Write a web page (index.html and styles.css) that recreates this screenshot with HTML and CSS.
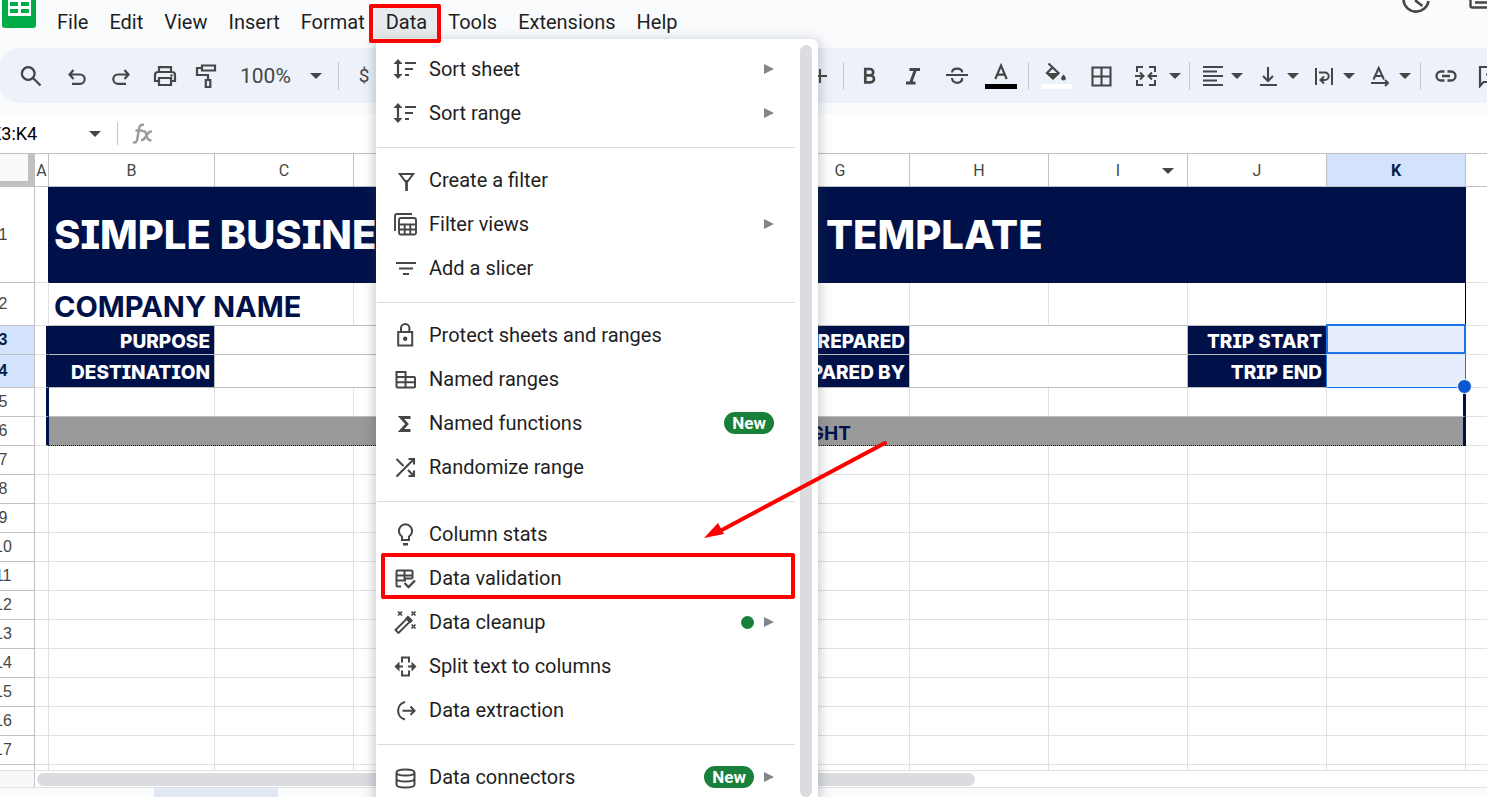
FILE: index.html
```html
<!DOCTYPE html>
<html lang="en">
<head>
<meta charset="utf-8">
<title>Simple Business Template</title>
<link rel="stylesheet" href="styles.css">
</head>
<body>
<svg class="defs" aria-hidden="true">
  <symbol id="caret" viewBox="0 0 12 6"><path d="M0 0h12L6 6z" fill="#444746"/></symbol>
  <symbol id="sort" viewBox="0 0 24 24"><path d="M5 4v16M12 6h11M12 12h8M12 18h4" fill="none" stroke="#444746" stroke-width="2.200"/><path d="m5 2 4.500 5h-9zM5 22l4.500-5h-9z" fill="#444746"/></symbol>
</svg>
<div class="app">
  <header class="top">
    <svg class="logo" width="34" height="28" viewBox="0 0 34 28" aria-label="Sheets"><path d="M0 0h34v25a3 3 0 0 1-3 3H3a3 3 0 0 1-3-3z" fill="#00ac47"/><path d="M6 0h23v16H6z" fill="#fff"/><path d="M8 2h8v4H8zM19 2h8v4h-8zM8 9h8v4H8zM19 9h8v4h-8z" fill="#00ac47"/></svg>
    <nav class="menubar">
      <button>File</button><button>Edit</button><button>View</button><button>Insert</button><button>Format</button><button class="open">Data</button><button>Tools</button><button>Extensions</button><button>Help</button>
    </nav>
    <div class="actions">
      <button aria-label="History"><svg width="30" height="16" viewBox="0 0 30 16"><path d="M2.500 0A12.600 12.600 0 0 0 27.500 1M15 0v1l6.500 5" fill="none" stroke="#444746" stroke-width="2.600"/></svg></button>
      <button aria-label="Comments"><svg width="30" height="12" viewBox="0 0 30 12"><path d="M1.500 0v5.500a2 2 0 0 0 2 2H24l5 4M6 2.500h20" fill="none" stroke="#444746" stroke-width="2.400"/></svg></button>
    </div>
  </header>

  <div class="toolbar-wrap">
  <div class="toolbar" role="toolbar" aria-label="Main">
    <button class="t48" aria-label="Search"><svg width="24" height="24" viewBox="0 0 24 24"><path d="M14 14 21.500 21.500M9.200 3.200a6.300 6.300 0 1 0 .1 0z" fill="none" stroke="#444746" stroke-width="2.300"/></svg></button>
    <button class="t44" aria-label="Undo"><svg width="24" height="24" viewBox="0 0 24 24"><path d="M8.500 6 4.500 10.500l4 4.500M5 10.500h10a4.700 4.700 0 0 1 0 9.400H7" fill="none" stroke="#444746" stroke-width="2.200"/></svg></button>
    <button class="t44" aria-label="Redo"><svg width="24" height="24" viewBox="0 0 24 24"><path d="m15.500 6 4 4.500-4 4.500M19 10.500H9a4.700 4.700 0 0 0 0 9.400h8" fill="none" stroke="#444746" stroke-width="2.200"/></svg></button>
    <button class="t44" aria-label="Print"><svg width="24" height="24" viewBox="0 0 24 24"><path d="M6 8V3.200h12V8M6 17H2V11a3 3 0 0 1 3-3h14a3 3 0 0 1 3 3v6h-4M6 14h12v7H6z" fill="none" stroke="#444746" stroke-width="2.200"/><circle cx="18.500" cy="11.500" r="1.200" fill="#444746"/></svg></button>
    <button class="t40" aria-label="Paint format"><svg width="24" height="26" viewBox="0 0 24 26"><path d="M7 2.500h13v5H7zM7 5H2v7h11v5M10.800 17h4.500v7h-4.500z" fill="none" stroke="#444746" stroke-width="2.200"/></svg></button>
    <label class="zoom"><select aria-label="Zoom"><option>100%</option></select><svg class="caret" width="12" height="6"><use href="#caret"/></svg></label>
    <i class="sep m7"></i>
    <button class="t36 txt" aria-label="Currency">$</button>
    <span class="gap"></span>
    <button class="t40" aria-label="Increase font size"><svg width="20" height="20" viewBox="0 0 20 20"><path d="M10 3v14M3 10h14" stroke="#444746" stroke-width="2"/></svg></button>
    <i class="sep m3"></i>
    <button class="t44" aria-label="Bold"><svg width="24" height="24" viewBox="0 0 24 24"><path d="M8.300 5h4.700a3.200 3.200 0 0 1 0 6.400H8.300zM8.300 11.400h5.200a3.500 3.500 0 0 1 0 7H8.300z" fill="none" stroke="#444746" stroke-width="2.700"/></svg></button>
    <button class="t44" aria-label="Italic"><svg width="24" height="24" viewBox="0 0 24 24"><path d="M8.500 5.500H19M5 19h9.500M14.500 5.500 9.500 19" fill="none" stroke="#444746" stroke-width="2.900"/></svg></button>
    <button class="t44" aria-label="Strikethrough"><svg width="24" height="24" viewBox="0 0 24 24"><path d="M1 11h22M7 8.500c.5-5 9.500-5.200 10.300-.2M7 14c.3 6.500 10.500 6.500 10.200 0" fill="none" stroke="#444746" stroke-width="2.200"/></svg></button>
    <button class="t44" aria-label="Text color"><svg width="32" height="28" viewBox="0 0 32 28"><path d="M10.300 17 16 3.500 21.700 17M12.400 12.600h7.200" fill="none" stroke="#444746" stroke-width="2.200"/><path d="M0 22h32v5H0z"/></svg></button>
    <i class="sep m5"></i>
    <button class="t44" aria-label="Fill color"><svg width="32" height="32" viewBox="0 0 32 32"><path d="M8.500 3.500 18.500 13l-5.500 5.500L7 13l6-6" fill="none" stroke="#444746" stroke-width="2.200"/><path d="M6 13h14l-7 6.500z" fill="#444746"/><path d="M23.500 14.500s2.300 2.300 2.300 3.800a2.300 2.300 0 0 1-4.600 0c0-1.500 2.300-3.800 2.300-3.800z" fill="#444746"/><path d="M1 24h31v5H1z" fill="#fff"/></svg></button>
    <button class="t46" aria-label="Borders"><svg width="24" height="24" viewBox="0 0 24 24"><path d="M3.500 3.500h18v18h-18zM12.500 3.500v18M3.500 12.500h18" fill="none" stroke="#444746" stroke-width="2.100"/></svg></button>
    <button class="t44" aria-label="Merge cells"><svg width="24" height="24" viewBox="0 0 24 24"><path d="M9 3H3v5M9 21H3v-5M15 3h6v5M15 21h6v-5M1 12h8M23 12h-8M6 8.500 9.500 12 6 15.500M18 8.500 14.500 12l3.500 3.500" fill="none" stroke="#444746" stroke-width="2"/></svg></button>
    <button class="t14" aria-label="Merge options"><svg width="12" height="6"><use href="#caret"/></svg></button>
    <i class="sep m7"></i>
    <button class="t32" aria-label="Horizontal align"><svg width="24" height="24" viewBox="0 0 24 24"><path d="M2 3h20M2 7.500h14M2 12h20M2 16.500h14M2 21h20" stroke="#444746" stroke-width="2"/></svg></button>
    <button class="t16" aria-label="Horizontal align options"><svg width="12" height="6"><use href="#caret"/></svg></button>
    <button class="t36 sp" aria-label="Vertical align"><svg width="24" height="24" viewBox="0 0 24 24"><path d="M13 3v14M8 12l5 5 5-5M5 21h17" fill="none" stroke="#444746" stroke-width="2.100"/></svg></button>
    <button class="t16" aria-label="Vertical align options"><svg width="12" height="6"><use href="#caret"/></svg></button>
    <button class="t36 sp" aria-label="Wrap"><svg width="24" height="24" viewBox="0 0 24 24"><path d="M5 4v17M21 4v17M8 8.500h6a3.700 3.700 0 0 1 0 7.400H10M13 12.500 9.500 16l3.500 3.500" fill="none" stroke="#444746" stroke-width="2"/></svg></button>
    <button class="t16" aria-label="Wrap options"><svg width="12" height="6"><use href="#caret"/></svg></button>
    <button class="t36 sp" aria-label="Rotate"><svg width="24" height="24" viewBox="0 0 24 24"><path d="M6.500 15.500 11.700 4 17 15.500M8.500 12h6.500M4 19h16M18 16l3 3-3 3" fill="none" stroke="#444746" stroke-width="2"/></svg></button>
    <button class="t16" aria-label="Rotate options"><svg width="12" height="6"><use href="#caret"/></svg></button>
    <i class="sep m7"></i>
    <button class="t36" aria-label="Link"><svg width="24" height="24" viewBox="0 0 24 24"><path d="M10.500 7.500H7a4.500 4.500 0 0 0 0 9h3.500M13.500 7.500H17a4.500 4.500 0 0 1 0 9h-3.500M8 12h8" fill="none" stroke="#444746" stroke-width="2.300"/></svg></button>
    <button class="t44" aria-label="Comment"><svg width="18" height="24" viewBox="0 0 18 24"><path d="M3 22V3h15v15H6.500zM9 10.500h9" fill="none" stroke="#444746" stroke-width="2.200"/></svg></button>
  </div>
  </div>

  <div class="formula">
    <label class="namebox"><input aria-label="Name box" value="K3:K4"><svg class="caret" width="12" height="6"><use href="#caret"/></svg></label>
    <i class="sep"></i>
    <svg class="fx" width="22" height="22" viewBox="0 0 22 22" aria-hidden="true"><path d="M1 19c3 1.500 4-1 4.500-4L7 6c.6-3.500 2-5 5-4M3.500 7.500h7M10.500 8.500c3-1 3 1 4 4s1.500 5.500 5 4.500M20 8.500c-3-.5-3.500 1-5.500 4S12 17.500 9 16.800" fill="none" stroke="#9b9e9d" stroke-width="2.500"/></svg>
    <input class="fxinput" aria-label="Formula">
  </div>

  <main class="sheet">
    <table>
      <colgroup><col class="c-num"><col class="c-a"><col class="c-b"><col class="c"><col class="c"><col class="c"><col class="c"><col class="c"><col class="c"><col class="c"><col class="c"><col class="c"><col></colgroup>
      <thead><tr><th class="corner"></th><th>A</th><th>B</th><th>C</th><th>D</th><th>E</th><th>F</th><th>G</th><th>H</th><th class="has-caret">I<svg width="12" height="6"><use href="#caret"/></svg></th><th>J</th><th class="sel">K</th><th class="rest"></th></tr></thead>
      <tbody>
        <tr class="r1"><th>1</th><td class="thin"></td><td class="title" colspan="5">SIMPLE BUSINESS</td><td class="title right" colspan="5">TEMPLATE</td><td></td></tr>
        <tr class="r2"><th>2</th><td></td><td class="company gb" colspan="2">COMPANY NAME</td><td class="gb"></td><td class="gb"></td><td class="gb"></td><td class="gb"></td><td class="gb"></td><td class="gb"></td><td class="gb"></td><td class="gb edge"></td><td></td></tr>
        <tr class="r3"><th class="sel">3</th><td class="bar"></td><td class="label">PURPOSE</td><td class="gb gr" colspan="3"></td><td class="label" colspan="2">DATE PREPARED</td><td class="gb gr" colspan="2"></td><td class="label">TRIP START</td><td class="pick active"></td><td></td></tr>
        <tr class="r4"><th class="sel">4</th><td class="bar"></td><td class="label">DESTINATION</td><td class="gb gr" colspan="3"></td><td class="label" colspan="2">PREPARED BY</td><td class="gb gr" colspan="2"></td><td class="label">TRIP END</td><td class="pick last"></td><td></td></tr>
        <tr><th>5</th><td class="bar"></td><td class="gb"></td><td class="gb"></td><td class="gb"></td><td class="gb"></td><td class="gb"></td><td class="gb"></td><td class="gb"></td><td class="gb"></td><td class="gb"></td><td class="gb bar"></td><td></td></tr>
        <tr><th>6</th><td class="bar"></td><td class="section" colspan="10">DEPARTURE FLIGHT</td><td></td></tr>
        <tr><th>7</th><td></td><td></td><td></td><td></td><td></td><td></td><td></td><td></td><td></td><td></td><td></td><td></td></tr>
        <tr><th>8</th><td></td><td></td><td></td><td></td><td></td><td></td><td></td><td></td><td></td><td></td><td></td><td></td></tr>
        <tr><th>9</th><td></td><td></td><td></td><td></td><td></td><td></td><td></td><td></td><td></td><td></td><td></td><td></td></tr>
        <tr><th>10</th><td></td><td></td><td></td><td></td><td></td><td></td><td></td><td></td><td></td><td></td><td></td><td></td></tr>
        <tr><th>11</th><td></td><td></td><td></td><td></td><td></td><td></td><td></td><td></td><td></td><td></td><td></td><td></td></tr>
        <tr><th>12</th><td></td><td></td><td></td><td></td><td></td><td></td><td></td><td></td><td></td><td></td><td></td><td></td></tr>
        <tr><th>13</th><td></td><td></td><td></td><td></td><td></td><td></td><td></td><td></td><td></td><td></td><td></td><td></td></tr>
        <tr><th>14</th><td></td><td></td><td></td><td></td><td></td><td></td><td></td><td></td><td></td><td></td><td></td><td></td></tr>
        <tr><th>15</th><td></td><td></td><td></td><td></td><td></td><td></td><td></td><td></td><td></td><td></td><td></td><td></td></tr>
        <tr><th>16</th><td></td><td></td><td></td><td></td><td></td><td></td><td></td><td></td><td></td><td></td><td></td><td></td></tr>
        <tr><th>17</th><td></td><td></td><td></td><td></td><td></td><td></td><td></td><td></td><td></td><td></td><td></td><td></td></tr>
        <tr><th></th><td></td><td></td><td></td><td></td><td></td><td></td><td></td><td></td><td></td><td></td><td></td><td></td></tr>
      </tbody>
    </table>
  </main>
  <div class="hscroll"><span class="hcorner"></span><span class="thumb"></span></div>
  <footer class="tabs"><span class="tab"></span></footer>
</div>

<div class="menu" role="menu" aria-label="Data">
  <div class="items">
    <button role="menuitem"><svg width="24" height="24"><use href="#sort"/></svg><span>Sort sheet</span><i class="sub"></i></button>
    <button role="menuitem"><svg width="24" height="24"><use href="#sort"/></svg><span>Sort range</span><i class="sub"></i></button>
    <hr>
    <button role="menuitem"><svg width="24" height="24" viewBox="0 0 24 24"><path d="M6.800 6h13.400l-5.700 7.500h-2z" fill="none" stroke="#444746" stroke-width="2"/><path d="M12.200 12h2.700v11h-2.700z" fill="#444746"/></svg><span>Create a filter</span></button>
    <button role="menuitem"><svg width="24" height="24" viewBox="0 0 24 24"><path d="M2 19V4a2 2 0 0 1 2-2h15M6 8a2 2 0 0 1 2-2h13a2 2 0 0 1 2 2v13a1.500 1.500 0 0 1-1.500 1.500h-14A1.500 1.500 0 0 1 6 21zM6 12.500h17M6 17.500h17M11.700 12.500v10M17.300 12.500v10" fill="none" stroke="#444746" stroke-width="1.900"/></svg><span>Filter views</span><i class="sub"></i></button>
    <button role="menuitem"><svg width="24" height="24" viewBox="0 0 24 24"><path d="M3 7h20M6 12.500h14M10 18h6" stroke="#444746" stroke-width="2"/></svg><span>Add a slicer</span></button>
    <hr>
    <button role="menuitem"><svg width="24" height="24" viewBox="0 0 24 24"><path d="M5.200 9h14v13.500h-14zM8 9V5.200a4.200 4.200 0 0 1 8.400 0V9" fill="none" stroke="#444746" stroke-width="2"/><circle cx="12.200" cy="15.800" r="2.200" fill="#444746"/></svg><span>Protect sheets and ranges</span></button>
    <button role="menuitem"><svg width="24" height="24" viewBox="0 0 24 24"><path d="M3.500 5h9v5H21a1 1 0 0 1 1 1v8.500a1 1 0 0 1-1 1H4.500a1 1 0 0 1-1-1zM3.500 10h9v10.500M3.500 15.300H22" fill="none" stroke="#444746" stroke-width="2"/></svg><span>Named ranges</span></button>
    <button role="menuitem"><svg width="24" height="24" viewBox="0 0 24 24"><path d="M17.500 6.500H8l6 6.500-6 6.500h9.500" fill="none" stroke="#444746" stroke-width="2.800"/></svg><span>Named functions</span><em class="new">New</em></button>
    <button role="menuitem"><svg width="24" height="24" viewBox="0 0 24 24"><path d="M3.500 21.500 21 4M15.500 4H21v5.500M15.500 21H21v-5.500M21 21l-6-6M3.500 4l7 7" fill="none" stroke="#444746" stroke-width="2.100"/></svg><span>Randomize range</span></button>
    <hr>
    <button role="menuitem"><svg width="24" height="24" viewBox="0 0 24 24"><path d="M9 18v-3.500a6.600 6.600 0 1 1 7 0V18z" fill="none" stroke="#444746" stroke-width="2"/><path d="M10 21h5v2.500h-5z" fill="#444746"/></svg><span>Column stats</span></button>
    <button role="menuitem" class="marked"><svg width="24" height="24" viewBox="0 0 24 24"><path d="M8 20.500H4.500a1 1 0 0 1-1-1V5.500a1 1 0 0 1 1-1h14a1 1 0 0 1 1 1v7M3.500 9.500h16M3.500 14.500H13M11.500 4.500v10M19.500 12.500H11" fill="none" stroke="#444746" stroke-width="2"/><path d="m11.500 17 4 4 6.500-6.500" fill="none" stroke="#444746" stroke-width="2.300"/></svg><span>Data validation</span></button>
    <button role="menuitem"><svg width="24" height="24" viewBox="0 0 24 24"><path d="m2.500 20 12-12 3 3-12 12z" fill="none" stroke="#444746" stroke-width="1.900"/><path d="m12 8.500 3-3 5 5-3 3z" fill="#444746"/><path d="m5 1.500 4 4m0-4-4 4M18.500 1.500l4 4m0-4-4 4M18.500 14.500l4 4m0-4-4 4" stroke="#444746" stroke-width="1.700"/></svg><span>Data cleanup</span><i class="dot"></i><i class="sub"></i></button>
    <button role="menuitem"><svg width="24" height="24" viewBox="0 0 24 24"><path d="M9 8.500V3.500h7v5M9 16.500v5h7v-5M3 12.500h7M15 12.500h7" fill="none" stroke="#444746" stroke-width="2"/><path d="m1.500 12.500 5-5v10zM23.500 12.500l-5-5v10z" fill="#444746"/></svg><span>Split text to columns</span></button>
    <button role="menuitem"><svg width="24" height="24" viewBox="0 0 24 24"><path d="M12 4a9 9 0 0 0 0 17.500M9.500 12.700H21M17.500 8.500l4 4.200-4 4.200" fill="none" stroke="#444746" stroke-width="2.100"/></svg><span>Data extraction</span></button>
    <hr>
    <button role="menuitem"><svg width="24" height="24" viewBox="0 0 24 24"><path d="M3.500 7.500c0-4 18-4 18 0s-18 4-18 0v12c0 4 18 4 18 0v-12M3.500 13.500c0 4 18 4 18 0" fill="none" stroke="#444746" stroke-width="2"/></svg><span>Data connectors</span><em class="new">New</em><i class="sub"></i></button>
  </div>
  <div class="vthumb"></div>
  <svg class="arrow" width="186" height="102" viewBox="0 0 186 102" aria-hidden="true"><path d="M181 4 16 92" stroke="#f00" stroke-width="4" stroke-linecap="round"/><path d="m0 99 14-15 6 11z" fill="#f00"/></svg>
</div>
</body>
</html>
```
FILE: styles.css
```css
* { box-sizing: border-box; }
body { margin: 0; overflow: hidden; background: #fff; font-family: Roboto, sans-serif; color: #1f1f1f; }
button { border: 0; background: none; padding: 0; margin: 0; font: inherit; color: inherit; }
input, select { border: 0; background: none; padding: 0; font: inherit; color: inherit; outline: 0; appearance: none; }
svg { display: block; flex: none; }
.defs { position: absolute; width: 0; height: 0; }

/* The window is scrolled 28px to the right of the app's left edge */
.app { margin-left: -28px; height: 100vh; display: flex; flex-direction: column; }
.top { display: flex; align-items: flex-start; height: 48px; padding-left: 30px; background: #f9fbfd; }
.menubar { display: flex; padding: 6px 0 0 10px; font-size: 20px; }
.menubar button { height: 32px; padding: 0 10px 0 11px; }
.menubar .open { position: relative; background: #e8ebee; }
.menubar .open::after { content: ""; position: absolute; inset: -2px -4px -5px -6px; border: 4px solid #f00; border-radius: 2px; z-index: 5; }
.actions { display: flex; align-items: flex-start; gap: 38px; margin-left: auto; margin-right: -12px; }

.toolbar-wrap { background: #f9fbfd; padding: 0 0 11px 23px; }
.toolbar { display: flex; align-items: center; height: 55px; padding-left: 12px; border-radius: 28px 0 0 28px; background: #edf1fa; color: #444746; overflow: hidden; }
.toolbar button, .toolbar .sep { flex: none; }
.toolbar button { display: flex; align-items: center; justify-content: center; height: 40px; }
.t14 { width: 14px; } .t16 { width: 16px; } .t32 { width: 32px; } .t36 { width: 36px; } .t40 { width: 40px; } .t44 { width: 44px; } .t46 { width: 46px; } .t48 { width: 48px; }
.sp { margin-left: 4px; }
.txt { font-size: 19px; }
.sep { width: 1px; height: 28px; background: #c7c7c7; }
.m3 { margin: 0 3px; } .m5 { margin: 0 5px; } .m7 { margin: 0 7px; }
.gap { flex: none; width: 418px; }
.zoom { display: grid; align-items: center; flex: none; width: 104px; padding-left: 13px; }
.zoom > *, .namebox > * { grid-area: 1 / 1; }
.zoom select { font-size: 21px; width: 90px; }
.caret { justify-self: end; margin-right: 9px; }

.formula { display: flex; align-items: center; height: 39px; background: #fff; }
.namebox { display: grid; align-items: center; width: 138px; padding-left: 18px; color: #000; font-size: 18px; }
.namebox input { width: 100px; }
.formula .sep { height: 23px; margin: 0 14px 0 7px; }
.fxinput { flex: 1; }

.sheet { flex: 1; min-height: 0; overflow: hidden; border-top: 1px solid #c0c0c0; }
table { width: 100%; table-layout: fixed; border-collapse: separate; border-spacing: 0; }
.c-num { width: 63px; } .c-a { width: 14px; } .c-b { width: 166px; } .c { width: 139px; }
th { padding: 0; font-size: 16px; font-weight: 400; color: #444746; border-right: 1px solid #c0c0c0; border-bottom: 1px solid #c0c0c0; }
thead tr { height: 33px; }
thead .corner { background: #f8f9fa; border-right: 7px solid #c0c0c0; border-bottom: 6px solid #c0c0c0; }
thead .sel, tbody .sel { background: #d3e3fd; font-weight: 700; color: #041e49; }
.has-caret { position: relative; }
.has-caret svg { position: absolute; right: 13px; top: 14px; }
tbody th { font-family: "Liberation Sans", sans-serif; }
tbody tr { height: 29px; }
tbody .r1 { height: 96px; } tbody .r2 { height: 43px; } tbody .r4 { height: 33px; }
td { padding: 0; border-right: 1px solid #e1e1e1; border-bottom: 1px solid #e1e1e1; white-space: nowrap; overflow: hidden; font-family: Inter, sans-serif; font-weight: 700; font-feature-settings: "cv08"; line-height: 1; }
td:last-child, .rest { border-right: 0; }
.thin { border-right-color: #00114a; }
.title { padding-left: 5px; background: #00114a; color: #fff; border-color: #00114a; font-size: 40px; font-weight: 800; }
.title.right { padding-left: 55px; }
.gb { border-bottom-color: #bdbdbd; }
.gr { border-right-color: #bdbdbd; }
.company { padding: 4px 0 0 5px; color: #00114a; font-size: 29px; }
.edge { border-right-color: #000; }
.bar { border-right: 3px solid #00114a; }
.label { padding: 3px 4px 0 0; text-align: right; background: #00114a; color: #fff; border-color: #bdbdbd; font-size: 19px; font-weight: 800; background-clip: padding-box; }
.section { padding-top: 4px; text-align: center; background: #999; color: #00114a; font-size: 19px; border-right: 3px solid #00114a; border-bottom: 1px dotted #00114a; }
.pick { position: relative; overflow: visible; background: #e6eefd; border-right-color: #1a73e8; }
.active::after { content: ""; position: absolute; inset: -2px -1px 0 -1px; border: 2px solid #1a73e8; z-index: 1; }
.pick.last { border-bottom-color: #1a73e8; }
.pick.last::before { content: ""; position: absolute; inset: 0 auto 0 -1px; width: 1px; background: #1a73e8; }
.pick.last::after { content: ""; position: absolute; right: -7px; bottom: -7px; width: 13px; height: 13px; border: 1px solid #fff; border-radius: 50%; background: #0b57d0; z-index: 2; }

.hscroll { display: flex; align-items: center; height: 18px; border-top: 1px solid #e1e1e1; border-bottom: 1px solid #e1e1e1; }
.hcorner { width: 63px; height: 16px; background: #f8f8f8; border-right: 1px solid #c7c7c7; margin-right: 2px; }
.thumb { width: 938px; height: 13px; border-radius: 7px; background: #dadce0; }
.tabs { height: 9px; padding-left: 182px; background: #f9fbfd; }
.tab { display: block; width: 124px; height: 9px; background: #e1e9f7; }

.menu { position: absolute; left: 376px; top: 39px; bottom: 0; width: 442px; background: #fff; border-radius: 0 6px 0 0; box-shadow: 0 3px 12px 2px rgba(60, 64, 67, .28); }
.items { display: flex; flex-direction: column; width: 419px; padding-top: 8px; font-size: 20px; }
.items button { position: relative; display: flex; align-items: center; flex: none; height: 44px; padding: 0 21px 0 17px; text-align: left; }
.items span { margin-left: 12px; flex: 1; }
hr { width: 418px; height: 1px; margin: 12px 0 10px 1px; border: 0; background: #dadce0; flex: none; }
.sub { border: 5px solid transparent; border-left: 10px solid #80868b; border-right: 0; margin-left: 10px; }
.new { padding: 0 8px; border-radius: 11px; background: #188038; color: #fff; font-size: 17px; line-height: 22px; font-style: normal; font-weight: 700; }
.dot { width: 13px; height: 13px; border-radius: 50%; background: #188038; }
.marked::after { content: ""; position: absolute; inset: -3px 0 1px 5px; border: 4px solid #f00; border-radius: 2px; }
.vthumb { position: absolute; top: 6px; right: 6px; bottom: 0; width: 12px; border-radius: 6px; background: #dadce0; }
.arrow { position: absolute; left: 328px; top: 400px; }
```
